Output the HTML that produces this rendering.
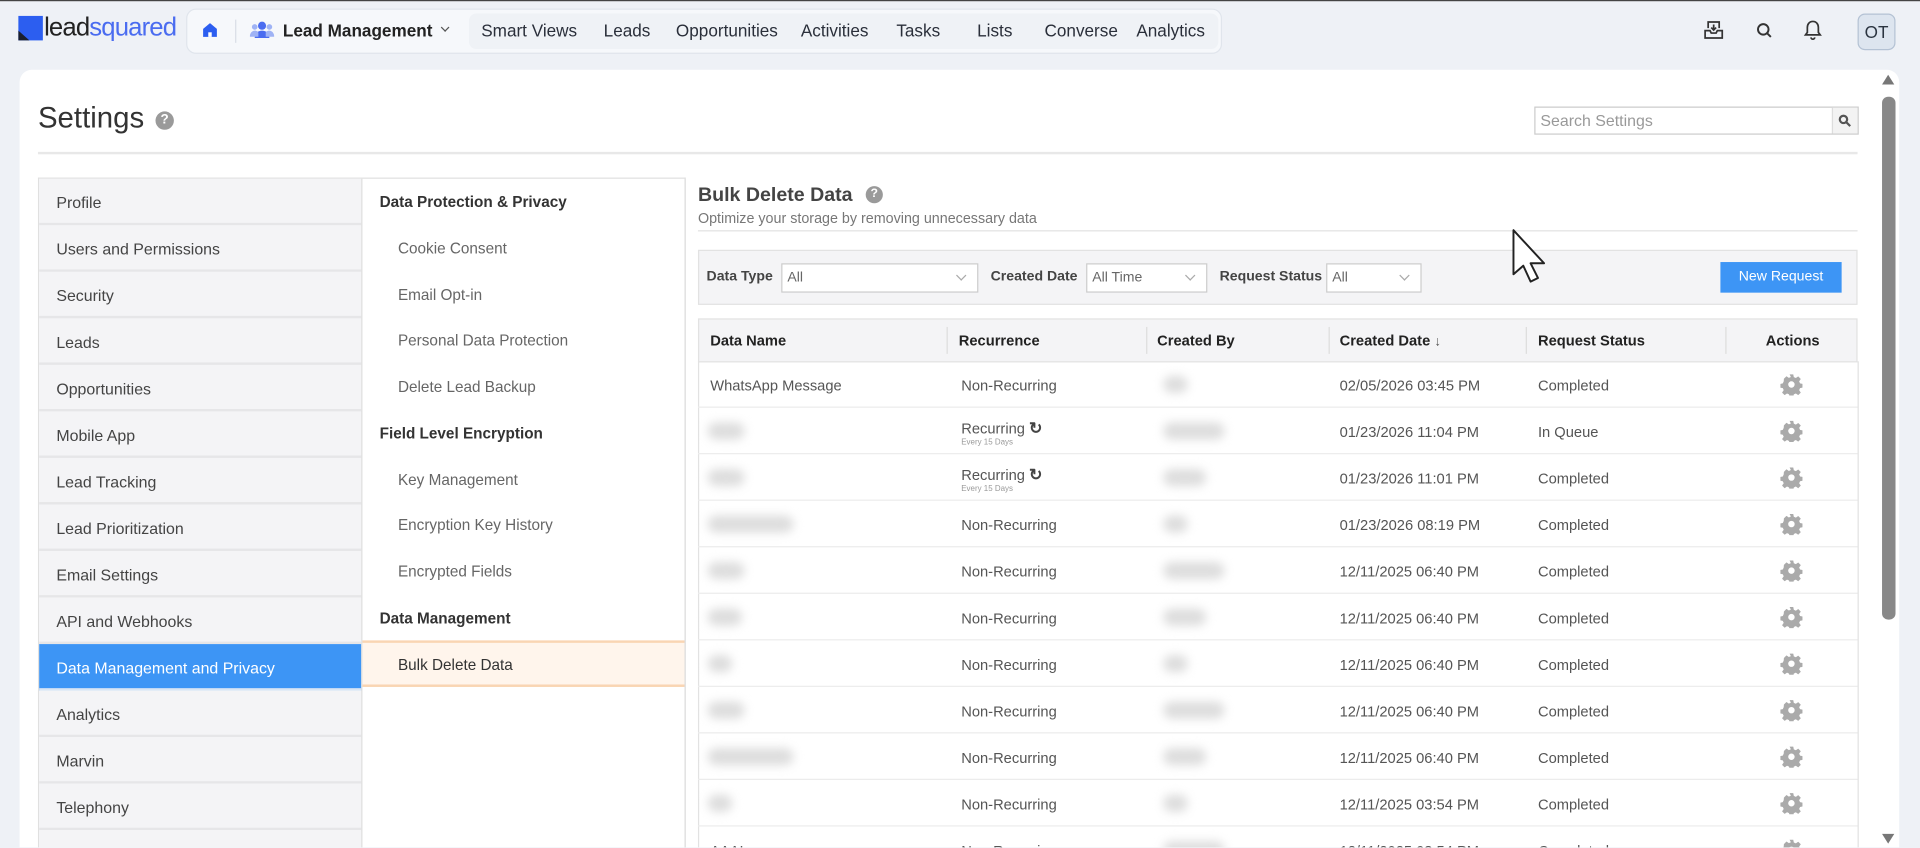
<!DOCTYPE html>
<html><head><meta charset="utf-8"><style>
*{box-sizing:border-box;margin:0;padding:0}
html,body{width:1920px;height:848px;overflow:hidden;background:#eef1f6;font-family:"Liberation Sans",sans-serif}
#w{position:absolute;left:0;top:0;width:1568px;height:692px;overflow:hidden;transform:scale(1.22449);transform-origin:0 0;border-top:1px solid #444;background:#eef1f6}
.a{position:absolute;white-space:nowrap}
.nav span{position:absolute;top:16px;font-size:14px;color:#2a2f3a}
.card{position:absolute;left:16px;top:56px;width:1535px;height:640px;background:#fff;border-radius:10px 10px 0 0}
.ln{position:absolute;left:32px;width:263px;height:38px;background:#f4f4f6;border-bottom:2px solid #e6e6e8;font-size:13px;color:#444;padding:12px 0 0 14px}
.mn{position:absolute;left:296px;width:263px;height:38px;font-size:12.5px;padding:12px 0 0 29px;color:#666}
.mn.h{padding-left:14px;color:#333;font-weight:bold;font-size:12.5px}
.sel{position:absolute;top:214px;height:24px;background:#fff;border:1px solid #ccc;font-size:11.5px;color:#666;padding:5px 0 0 4px}
.sel:after{content:"";position:absolute;right:10px;top:6px;width:5px;height:5px;border-right:1px solid #aaa;border-bottom:1px solid #aaa;transform:rotate(45deg)}
.fl{position:absolute;top:219px;font-size:11.5px;color:#444;font-weight:bold}
.th{position:absolute;top:270px;font-size:12px;font-weight:bold;color:#222}
.row{position:absolute;left:570px;width:947px;height:38px;border-bottom:1px solid #ececec}
.row span{position:absolute;top:13px;font-size:12px;color:#555}
.bl{position:absolute;top:12px;height:14px;border-radius:7px;background:#ddd;filter:blur(4px)}
.gear{position:absolute;left:884px;top:10px;width:18px;height:18px}
.sub{position:absolute;top:25px;left:215px;font-size:6.5px;color:#999}
</style></head><body><div id="w">
<div class="a" style="left:15px;top:12px;width:20px;height:20px;background:#2c5ef0"></div>
<div class="a" style="left:15px;top:24px;width:0;height:0;border-left:9px solid #1a1f2e;border-top:8px solid transparent"></div>
<div class="a" style="left:36px;top:10px;font-size:21px;letter-spacing:-0.7px;color:#222">lead<span style="color:#4a6cf0">squared</span></div>
<div class="a" style="left:152px;top:6px;width:846px;height:37px;background:#f6f8fb;border:1px solid #e0e5ec;border-radius:8px"></div>
<div class="a" style="left:383px;top:10px;width:612px;height:29px;background:#eff2f6;border-radius:6px"></div>
<svg class="a" style="left:164px;top:16px" width="15" height="15" viewBox="0 0 16 16"><path d="M2 7L8 2l6 5v7H2z" fill="#2c5ef0"/><rect x="6.5" y="10" width="3" height="4" fill="#fff"/></svg>
<div class="a" style="left:192px;top:15px;width:1px;height:19px;background:#d9dee6"></div>
<svg class="a" style="left:204px;top:16px" width="20" height="15" viewBox="0 0 20 15"><circle cx="10" cy="4" r="3.3" fill="#4a6cf0"/><path d="M4 14c0-4 3-6 6-6s6 2 6 6z" fill="#4a6cf0"/><circle cx="4" cy="5" r="2.3" fill="#9fb3f5"/><circle cx="16" cy="5" r="2.3" fill="#9fb3f5"/><path d="M0 13c0-3 2-5 4-5s3 1 3 2v3zM20 13c0-3-2-5-4-5s-3 1-3 2v3z" fill="#9fb3f5"/></svg>
<div class="a" style="left:231px;top:16px;font-size:14px;color:#222;font-weight:bold">Lead Management</div>
<div class="a" style="left:361px;top:19px;width:5px;height:5px;border-right:1px solid #555;border-bottom:1px solid #555;transform:rotate(45deg)"></div>
<div class="nav"><span style="left:393px">Smart Views</span><span style="left:493px">Leads</span><span style="left:552px">Opportunities</span><span style="left:654px">Activities</span><span style="left:732px">Tasks</span><span style="left:798px">Lists</span><span style="left:853px">Converse</span><span style="left:928px">Analytics</span></div>
<svg class="a" style="left:1391px;top:15px" width="17" height="17" viewBox="0 0 17 17" fill="none" stroke="#333" stroke-width="1.4"><path d="M4 7V2h9v5M1.5 9h4l1 2h4l1-2h4v6h-14z"/><path d="M8.5 4v4M6.5 6.5l2 2 2-2"/></svg>
<svg class="a" style="left:1434px;top:17px" width="14" height="14" viewBox="0 0 14 14" fill="none" stroke="#333" stroke-width="1.6"><circle cx="6" cy="6" r="4.3"/><path d="M9.2 9.2l3 3"/></svg>
<svg class="a" style="left:1473px;top:15px" width="15" height="17" viewBox="0 0 15 17" fill="none" stroke="#333" stroke-width="1.4"><path d="M7.5 1.5c-3 0-4.5 2.5-4.5 5v4l-1.5 2h12l-1.5-2v-4c0-2.5-1.5-5-4.5-5zM6 14.5a1.5 1.5 0 003 0"/></svg>
<div class="a" style="left:1517px;top:10px;width:31px;height:30px;background:#dde5ef;border:1px solid #b4c2d4;border-radius:6px;font-size:14px;color:#2b3440;text-align:center;padding-top:6px">OT</div>
<div class="card"></div>
<div class="a" style="left:1537px;top:60px;width:0;height:0;border-left:5px solid transparent;border-right:5px solid transparent;border-bottom:8px solid #777"></div>
<div class="a" style="left:1537px;top:78px;width:11px;height:427px;background:#888;border-radius:5px"></div>
<div class="a" style="left:1537px;top:680px;width:0;height:0;border-left:5px solid transparent;border-right:5px solid transparent;border-top:8px solid #777"></div>
<div class="a" style="left:31px;top:82px;font-size:24px;color:#333">Settings</div>
<div class="a" style="left:127px;top:90px;width:15px;height:15px;border-radius:50%;background:#9a9a9a;color:#fff;font-size:11px;font-weight:bold;text-align:center;line-height:15px">?</div>
<div class="a" style="left:1253px;top:86px;width:265px;height:23px;border:1px solid #ccc;background:#fff;font-size:13px;color:#999;padding:3px 0 0 4px">Search Settings</div>
<div class="a" style="left:1496px;top:87px;width:21px;height:21px;background:#f3f3f3;border-left:1px solid #ddd"></div>
<svg class="a" style="left:1501px;top:92px" width="11" height="11" viewBox="0 0 11 11" fill="none" stroke="#555" stroke-width="1.8"><circle cx="4.5" cy="4.5" r="3"/><path d="M7 7l3 3"/></svg>
<div class="a" style="left:31px;top:123px;width:1486px;height:2px;background:#e8e8e8"></div>
<div class="a" style="left:31px;top:144px;width:529px;height:550px;border:1px solid #e0e0e0;border-bottom:none"></div>
<div class="ln" style="top:145px">Profile</div>
<div class="ln" style="top:183px">Users and Permissions</div>
<div class="ln" style="top:221px">Security</div>
<div class="ln" style="top:259px">Leads</div>
<div class="ln" style="top:297px">Opportunities</div>
<div class="ln" style="top:335px">Mobile App</div>
<div class="ln" style="top:373px">Lead Tracking</div>
<div class="ln" style="top:411px">Lead Prioritization</div>
<div class="ln" style="top:449px">Email Settings</div>
<div class="ln" style="top:487px">API and Webhooks</div>
<div class="ln" style="top:525px;background:#3d95f5;color:#fff;border-bottom-color:#d9e6f5">Data Management and Privacy</div>
<div class="ln" style="top:563px">Analytics</div>
<div class="ln" style="top:601px">Marvin</div>
<div class="ln" style="top:639px">Telephony</div>
<div class="ln" style="top:677px"></div>
<div class="a" style="left:295px;top:145px;width:1px;height:548px;background:#ddd"></div>
<div class="mn h" style="top:145px">Data Protection &amp; Privacy</div>
<div class="mn" style="top:183px">Cookie Consent</div>
<div class="mn" style="top:221px">Email Opt-in</div>
<div class="mn" style="top:258px">Personal Data Protection</div>
<div class="mn" style="top:296px">Delete Lead Backup</div>
<div class="mn h" style="top:334px">Field Level Encryption</div>
<div class="mn" style="top:372px">Key Management</div>
<div class="mn" style="top:409px">Encryption Key History</div>
<div class="mn" style="top:447px">Encrypted Fields</div>
<div class="mn h" style="top:485px">Data Management</div>
<div class="mn" style="top:522px;background:#fff5ec;border-top:2px solid #f9d5b3;border-bottom:2px solid #f9d5b3;color:#333;padding-top:11px">Bulk Delete Data</div>
<div class="a" style="left:559px;top:145px;width:1px;height:548px;background:#ddd"></div>
<div class="a" style="left:570px;top:150px;font-size:16px;font-weight:bold;color:#444">Bulk Delete Data</div>
<div class="a" style="left:707px;top:151px;width:14px;height:14px;border-radius:50%;background:#9a9a9a;color:#fff;font-size:10px;font-weight:bold;text-align:center;line-height:14px">?</div>
<div class="a" style="left:570px;top:171px;font-size:11.7px;color:#777">Optimize your storage by removing unnecessary data</div>
<div class="a" style="left:570px;top:187px;width:947px;height:1px;background:#e2e2e2"></div>
<div class="a" style="left:570px;top:203px;width:947px;height:45px;background:#f4f4f6;border:1px solid #e2e2e2"></div>
<div class="fl" style="left:577px">Data Type</div>
<div class="sel" style="left:638px;width:161px">All</div>
<div class="fl" style="left:809px">Created Date</div>
<div class="sel" style="left:887px;width:99px">All Time</div>
<div class="fl" style="left:996px">Request Status</div>
<div class="sel" style="left:1083px;width:78px">All</div>
<div class="a" style="left:1405px;top:213px;width:99px;height:25px;background:#3d95f5;color:#fff;font-size:11.5px;text-align:center;line-height:25px">New Request</div>
<div class="a" style="left:570px;top:259px;width:947px;height:36px;background:#f4f4f6;border:1px solid #e2e2e2"></div>
<div class="a" style="left:773px;top:266px;width:1px;height:22px;background:#ddd"></div>
<div class="a" style="left:936px;top:266px;width:1px;height:22px;background:#ddd"></div>
<div class="a" style="left:1085px;top:266px;width:1px;height:22px;background:#ddd"></div>
<div class="a" style="left:1246px;top:266px;width:1px;height:22px;background:#ddd"></div>
<div class="a" style="left:1409px;top:266px;width:1px;height:22px;background:#ddd"></div>
<div class="th" style="left:580px">Data Name</div>
<div class="th" style="left:783px">Recurrence</div>
<div class="th" style="left:945px">Created By</div>
<div class="th" style="left:1094px">Created Date <span style="font-size:11px;color:#555">↓</span></div>
<div class="th" style="left:1256px">Request Status</div>
<div class="th" style="left:1442px">Actions</div>
<div class="a" style="left:570px;top:294px;width:1px;height:400px;background:#e2e2e2"></div>
<div class="a" style="left:1517px;top:294px;width:1px;height:400px;background:#e2e2e2"></div>
<div id="rows"></div>
<svg class="a" style="left:1235px;top:186px" width="30" height="46" viewBox="0 0 30 46"><path d="M1 1v36l8-7 6 13 6-3-6-12h11z" fill="#fff" stroke="#222" stroke-width="1.6" stroke-linejoin="round"/></svg>
</div>
<script>
var d=[["WhatsApp Message",0,"02/05/2026 03:45 PM","Completed",0],["",1,"01/23/2026 11:04 PM","In Queue",30],["",1,"01/23/2026 11:01 PM","Completed",30],["",0,"01/23/2026 08:19 PM","Completed",70],["",0,"12/11/2025 06:40 PM","Completed",30],["",0,"12/11/2025 06:40 PM","Completed",28],["",0,"12/11/2025 06:40 PM","Completed",20],["",0,"12/11/2025 06:40 PM","Completed",30],["",0,"12/11/2025 06:40 PM","Completed",70],["",0,"12/11/2025 03:54 PM","Completed",20],["AAAL",0,"12/11/2025 03:54 PM","Completed",0]];
var g='<svg class="gear" viewBox="0 0 24 24"><path fill="#aaa" d="M10 1h4l.6 3 2.2 1 2.6-1.8 2.8 2.8-1.8 2.6 1 2.2 3 .6v4l-3 .6-1 2.2 1.8 2.6-2.8 2.8-2.6-1.8-2.2 1-.6 3h-4l-.6-3-2.2-1-2.6 1.8-2.8-2.8 1.8-2.6-1-2.2-3-.6v-4l3-.6 1-2.2L3.8 5.8l2.8-2.8 2.6 1.8 2.2-1z"/><circle cx="12" cy="12" r="3.5" fill="#fff"/></svg>';
var h='',y=294;
d.forEach(function(r){
h+='<div class="row" style="top:'+y+'px">';
if(r[0])h+='<span style="left:10px">'+r[0]+'</span>';else h+='<div class="bl" style="left:8px;width:'+r[4]+'px"></div>';
if(r[1])h+='<span style="left:215px;top:9px">Recurring <b style="color:#444;font-size:13px">&#x21bb;</b></span><div class="sub">Every 15 Days</div>';else h+='<span style="left:215px">Non-Recurring</span>';
h+='<div class="bl" style="left:380px;width:'+(20+(y%3)*15)+'px"></div>';
h+='<span style="left:524px">'+r[2]+'</span><span style="left:686px">'+r[3]+'</span>'+g+'</div>';y+=38;});
document.getElementById('rows').outerHTML=h;
</script>
</body></html>
